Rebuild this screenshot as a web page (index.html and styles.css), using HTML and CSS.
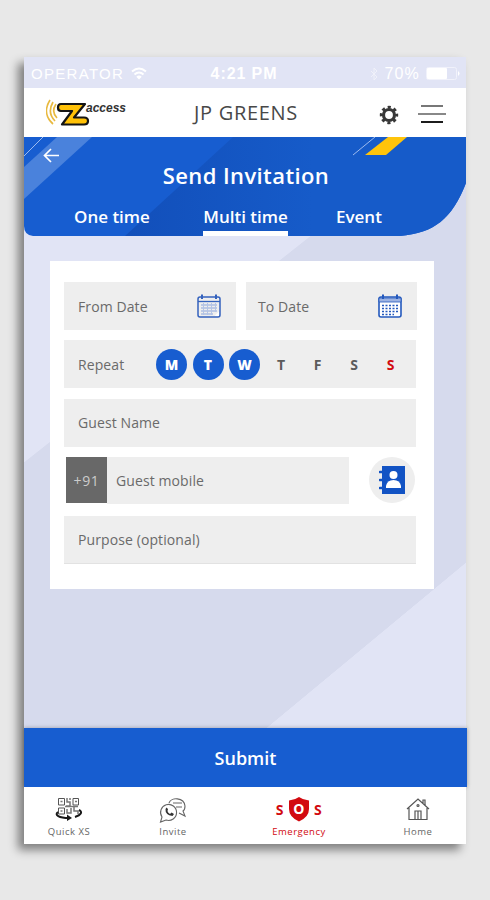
FILE: index.html
```
<!DOCTYPE html>
<html lang="en">
<head>
    <meta charset="UTF-8">
    <meta name="viewport" content="width=device-width, initial-scale=1.0">
    <title>Send Invitation</title>
    <link rel="stylesheet" href="styles.css">
</head>
<body>
    <div class="phone">
        <!-- Status bar -->
        <div class="status-bar">
            <div class="status-left">
                <span class="operator">OPERATOR</span>
                <svg width="16" height="13" viewBox="0 0 16 13" fill="none" stroke="#fff" stroke-width="2">
                    <path d="M1 4.5Q8-1.5 15 4.5M3.5 7.5Q8 3.5 12.5 7.5"/>
                    <path d="M8 12.5L5.3 9.7Q8 7.4 10.7 9.7Z" fill="#fff" stroke="none"/>
                </svg>
            </div>
            <span class="time">4:21 PM</span>
            <div class="status-right">
                <svg class="bluetooth" width="8" height="14" viewBox="0 0 8 14" fill="none" stroke="#fff">
                    <path d="M1 4L7 10L4 13V1L7 4L1 10"/>
                </svg>
                <span class="percent">70%</span>
                <svg width="34" height="14" viewBox="0 0 34 14">
                    <rect x=".5" y=".5" width="30" height="12" rx="2" fill="none" stroke="#f1f2fb"/>
                    <rect x="1" y="1" width="20" height="11" rx="1" fill="#fff"/>
                    <path d="M32 4Q35 6.5 32 9Z" fill="#fff"/>
                </svg>
            </div>
        </div>

        <!-- Header -->
        <header>
            <div class="logo">
                <svg width="44" height="28" viewBox="0 0 44 28">
                    <g fill="none" stroke="#e8b93f" stroke-width="1.700">
                        <path d="M4 1C-1 9-1 18 7 25"/>
                        <path d="M7 3C3 10 3 16 9 22"/>
                        <path d="M10 5C6 11 7 15 11 19"/>
                    </g>
                    <path d="M15 5H39L28 18.500H38Q42 18.500 42 22Q42 25.500 38 25.500H16L26 12H15Q12 12 12 8.500Q12 5 15 5Z" fill="#ffc107" stroke="#141414" stroke-width="2.200" stroke-linejoin="round"/>
                </svg>
                <span class="logo-text">access</span>
            </div>
            <div class="site-name">JP GREENS</div>
            <svg class="gear" width="20" height="20" viewBox="0 0 20 20" fill="none" stroke="#383838">
                <circle cx="10" cy="10" r="7.800" stroke-width="2.800" stroke-dasharray="3.126 3" stroke-dashoffset="1.563"/>
                <circle cx="10" cy="10" r="5.500" stroke-width="3.200"/>
            </svg>
            <svg class="menu" width="28" height="20" viewBox="0 0 28 20">
                <rect x="3" y="1" width="22" height="2" fill="#777"/>
                <rect x="0" y="9" width="28" height="2" fill="#888"/>
                <rect x="3" y="17" width="22" height="2" fill="#1c1c1c"/>
            </svg>
        </header>

        <!-- Title and tabs -->
        <section class="hero">
            <svg class="hero-bg" width="442" height="99" viewBox="0 0 442 99">
                <defs>
                    <linearGradient id="shade" x1="0" x2="1">
                        <stop offset="0" stop-color="#124fba"/>
                        <stop offset=".55" stop-color="#165bc9"/>
                    </linearGradient>
                </defs>
                <path d="M0 0H442V46C428 82 410 96 376 99H9Q0 98 0 89Z" fill="#175dd0"/>
                <path d="M209 0H442V46C428 82 410 96 376 99H101Z" fill="url(#shade)"/>
                <path d="M33 0H68L0 62V30Z" fill="#4a82dc"/>
                <path d="M19 0L0 19M351 0L329 18" stroke="#9dbbef" fill="none"/>
                <path d="M364 0H383L362 18H341Z" fill="#ffc40b"/>
            </svg>
            <svg class="back" width="17" height="15" viewBox="0 0 17 15" fill="none" stroke="#fff" stroke-width="1.700">
                <path d="M16 7.500H1.500M8 1L1.500 7.500L8 14"/>
            </svg>
            <h1>Send Invitation</h1>
            <nav class="tabs">
                <a class="tab">One time</a>
                <a class="tab active">Multi time</a>
                <a class="tab">Event</a>
            </nav>
        </section>

        <!-- Invitation form -->
        <main>
            <form class="card">
                <div class="row dates">
                    <div class="field">
                        <span>From Date</span>
                        <svg width="24" height="24" viewBox="0 0 24 24" fill="none" stroke="#3462bd">
                            <rect x="1" y="3" width="22" height="20" rx="2" stroke-width="1.500"/>
                            <path d="M1 7.500H23" stroke-width="1.300"/>
                            <path d="M5 .5V5M19 .5V5" stroke-width="2"/>
                            <path d="M4 11H20M4 14H20M4 17H20M4 20H16" stroke="#8ca6dc"/>
                            <path d="M6.500 9V21M10.500 9V21M14.500 9V21M18.500 9V18" stroke="#b4c4e6"/>
                            <path d="M17.500 22L22 17.500V22Z" fill="#fff" stroke="none"/>
                        </svg>
                    </div>
                    <div class="field">
                        <span>To Date</span>
                        <svg width="24" height="24" viewBox="0 0 24 24" fill="none" stroke="#2459bd">
                            <rect x="1" y="3" width="22" height="20" rx="2" fill="#fff" stroke-width="1.600"/>
                            <path d="M1 4H23V8H1Z" fill="#9db3e2" stroke-width=".8"/>
                            <path d="M5 .5V5M19 .5V5" stroke-width="2"/>
                            <path d="M4 11.500H20M4 14.500H20M4 17.500H20M4 20.500H16" stroke-width="1.600" stroke-dasharray="2 1.500"/>
                        </svg>
                    </div>
                </div>
                <div class="row field repeat">
                    <span>Repeat</span>
                    <div class="days">
                        <b class="day on">M</b>
                        <b class="day on">T</b>
                        <b class="day on">W</b>
                        <b class="day">T</b>
                        <b class="day">F</b>
                        <b class="day">S</b>
                        <b class="day sunday">S</b>
                    </div>
                </div>
                <div class="row field"><span>Guest Name</span></div>
                <div class="row mobile">
                    <div class="code"><span>+91</span></div>
                    <div class="field"><span>Guest mobile</span></div>
                    <div class="contacts">
                        <svg width="27" height="30" viewBox="0 0 27 30">
                            <path d="M3 1H26V29H3Z" fill="#1253c4"/>
                            <path d="M1 7H5M1 15H5M1 23H5" stroke="#1253c4" stroke-width="2.600" stroke-linecap="round"/>
                            <circle cx="14.500" cy="10" r="4" fill="#fff"/>
                            <path d="M7 23V21Q8 15 14.500 15Q21 15 22 21V23Z" fill="#fff"/>
                        </svg>
                    </div>
                </div>
                <div class="row field purpose"><span>Purpose (optional)</span></div>
            </form>
        </main>

        <div class="submit">Submit</div>

        <!-- Bottom menu -->
        <footer>
            <div class="item quick">
                <svg width="28" height="24" viewBox="0 0 28 24" fill="none" stroke="#555">
                    <path d="M3.500 1.500H9.500V8H3.500ZM18 1.500H23.500V8H18ZM3.500 11H9.500V17H3.500Z"/>
                    <path d="M5.500 4.500H7.500M20 4.500H22M5.500 14H7.500M12 1V5H15V9H11M15 1V3M12 12V16H16V11M19 10V14H23V17M10 9.500H23" stroke-width="1.500" stroke="#777"/>
                    <path d="M3 15C-1 18 4 21 14 21M20 20C26 18 28 15 24 13" stroke="#181818" stroke-width="2"/>
                    <path d="M12 17.500L17 21L12 24Z" fill="#181818" stroke="none"/>
                </svg>
                <span>Quick XS</span>
            </div>
            <div class="item invite">
                <svg width="28" height="26" viewBox="0 0 28 26" fill="none" stroke="#666" stroke-width="1.100">
                    <path d="M10 6C12 0 25 0 26 9Q26 13 24 14L26 19L20 16M14 6H23M17 10H23"/>
                    <path d="M3 20A8 8 0 1 1 7 23L1.500 25Z"/>
                    <path d="M6.500 12Q6 18 13.500 19L15 17L12.500 15.500L11 17Q8.500 15.500 8.500 14L9 12L7.500 10.500Z" fill="#333" stroke="none"/>
                </svg>
                <span>Invite</span>
            </div>
            <div class="item emergency">
                <div class="sos">
                    <b>S</b>
                    <div class="shield">
                        <svg width="22" height="25" viewBox="0 0 22 25">
                            <path d="M11 0Q15 3 21 3.500V12Q21 20 11 24.500Q1 20 1 12V3.500Q7 3 11 0Z" fill="#d20a10"/>
                        </svg>
                        <b>O</b>
                    </div>
                    <b>S</b>
                </div>
                <span>Emergency</span>
            </div>
            <div class="item home">
                <svg width="24" height="24" viewBox="0 0 24 24" fill="none" stroke="#555" stroke-width="1.200">
                    <path d="M1 12L12 2L23 12M3 11V22.500H21V11M17 6V3H19V8M9 22V14H15V22M12 14V22"/>
                    <circle cx="12" cy="8.500" r="1"/>
                </svg>
                <span>Home</span>
            </div>
        </footer>
    </div>
</body>
</html>
```
FILE: styles.css
```
* {
    box-sizing: border-box;
}
body {
    margin: 0;
    padding: 57px 0 0 24px;
    height: 900px;
    overflow: hidden;
    background-color: #e8e8e8;
    font-family: 'Open Sans', 'Noto Sans', sans-serif;
}
svg {
    display: block;
    flex: none;
}
span, h1, a, b {
    white-space: nowrap;
}
.phone {
    width: 442px;
    height: 787px;
    display: flex;
    flex-direction: column;
    background-color: #e1e4f5;
    box-shadow: -6px 6px 9px rgba(0, 0, 0, 0.45);
}
.status-bar {
    height: 31px;
    padding: 2px 6px 0 7px;
    display: grid;
    grid-template-columns: 1fr auto 1fr;
    align-items: center;
    color: #fff;
    font-family: 'Liberation Sans', sans-serif;
    font-size: 16px;
}
.status-left, .status-right {
    display: flex;
    align-items: center;
    gap: 7px;
}
.status-right {
    justify-content: flex-end;
    gap: 6px;
}
.operator {
    font-size: 15px;
    letter-spacing: 1.3px;
}
.time {
    margin-right: 3px;
    font-weight: bold;
    letter-spacing: 0.9px;
}
.percent {
    letter-spacing: 1.2px;
}
.bluetooth {
    opacity: 0.5;
}
header {
    height: 49px;
    padding: 0 20px 0 22px;
    display: flex;
    align-items: center;
    background-color: #fff;
}
.logo {
    width: 148px;
    display: flex;
}
.logo-text {
    margin: 2px 0 0 -4px;
    font-family: 'Liberation Sans', sans-serif;
    font-size: 12px;
    line-height: 14px;
    font-weight: bold;
    font-style: italic;
    color: #333;
}
.site-name {
    width: 185px;
    font-size: 20px;
    letter-spacing: 0.7px;
    color: #484848;
}
.menu {
    margin: 3px 0 0 19px;
}
.gear {
    margin-top: 4px;
}
.hero {
    position: relative;
    height: 99px;
    flex: none;
    color: #fff;
}
.hero-bg {
    position: absolute;
    top: 0;
    left: 0;
}
.back {
    position: absolute;
    top: 11px;
    left: 19px;
}
h1 {
    position: relative;
    margin: 0;
    padding-top: 22px;
    line-height: 32px;
    font-size: 22px;
    font-weight: 600;
    letter-spacing: 0.4px;
    text-align: center;
    text-indent: 2px;
}
.tabs {
    position: relative;
    display: grid;
    grid-template-columns: 129px 85px 96px;
    padding: 11px 0 0 50px;
    font-size: 17px;
    font-weight: 600;
    line-height: 29px;
}
.tab {
    height: 34px;
}
.tab.active {
    border-bottom: 5px solid #fff;
    text-align: center;
}
.tab:last-child {
    padding-left: 48px;
}
main {
    height: 492px;
    flex: none;
    padding: 25px 0 0 26px;
    background-color: #d6daed;
    background-image:
        linear-gradient(to bottom right, #e1e4f5 50%, transparent 50.2%),
        linear-gradient(to top left, #e1e4f5 50%, transparent 50.2%);
    background-repeat: no-repeat;
    background-size: 286px 226px, 199px 165px;
    background-position: 0 0, 100% 100%;
}
/* blue area leaves the lower right corner open */
.hero::before {
    content: "";
    position: absolute;
    right: 0;
    bottom: 0;
    width: 90px;
    height: 60px;
    background-color: #d6daed;
}
.card {
    width: 384px;
    height: 328px;
    padding: 21px 18px 0 14px;
    display: flex;
    flex-direction: column;
    gap: 10.400px;
    background-color: #fff;
}
.row {
    height: 48px;
    flex: none;
}
.field {
    display: flex;
    align-items: center;
    justify-content: space-between;
    padding: 0 14px;
    background-color: #eee;
    color: #6a6a6a;
    font-size: 14px;
}
.field > span {
    letter-spacing: 0.1px;
}
.dates {
    display: grid;
    grid-template-columns: 172px 171px;
    gap: 10px;
}
.dates .field {
    padding: 0 15px 0 14px;
}
.dates .field:last-child {
    padding-left: 12px;
}
.repeat {
    padding-right: 10px;
}
.days {
    display: flex;
    gap: 5.500px;
}
.day {
    width: 31px;
    height: 31px;
    border-radius: 50%;
    line-height: 31px;
    text-align: center;
    font-size: 14px;
    color: #5b5b5b;
}
.day.on {
    background-color: #175dd0;
    color: #fff;
    font-weight: 800;
}
.day.sunday {
    color: #d20a10;
}
.mobile {
    display: flex;
    padding-left: 2px;
}
.code {
    width: 41px;
    height: 46px;
    display: flex;
    align-items: center;
    justify-content: center;
    background-color: #686868;
    color: #ccc;
    font-size: 14px;
    letter-spacing: 0.6px;
}
.mobile .field {
    width: 242px;
    height: 47px;
    padding: 0 9px;
}
.contacts {
    width: 46px;
    height: 46px;
    margin-left: 20px;
    display: flex;
    align-items: center;
    justify-content: center;
    border-radius: 50%;
    background-color: #eee;
}
.purpose {
    border-bottom: 1px solid #e2e2e2;
}
.submit {
    position: relative;
    width: 443px;
    height: 59px;
    flex: none;
    line-height: 60px;
    text-align: center;
    background-color: #175dd0;
    box-shadow: 0 0 4px rgba(0, 0, 0, 0.3);
    color: #fff;
    font-size: 18px;
    font-weight: 600;
}
footer {
    position: relative;
    height: 57px;
    padding: 10px 32px 0 20px;
    display: flex;
    background-color: #fff;
    color: #666;
    font-size: 9.500px;
    letter-spacing: 0.5px;
    line-height: 12px;
}
.item {
    display: flex;
    flex-direction: column;
    align-items: center;
    justify-content: space-between;
    height: 41px;
}
.quick {
    width: 50px;
}
.invite {
    width: 30px;
    margin-left: 64px;
}
.emergency {
    width: 56px;
    margin-left: 83px;
    color: #d20a10;
}
.home {
    width: 32px;
    margin-left: 75px;
}
.sos {
    display: flex;
    align-items: center;
    gap: 4px;
    font-size: 14px;
}
.shield {
    position: relative;
}
.shield b {
    position: absolute;
    left: 0;
    right: 0;
    top: 6px;
    text-align: center;
    color: #fff;
}
```
